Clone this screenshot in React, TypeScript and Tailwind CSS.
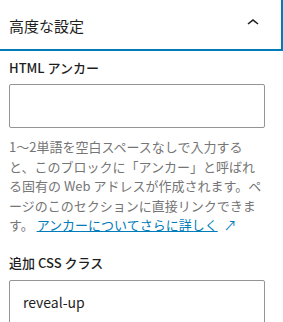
import React from 'react';

const font = "font-['Noto_Sans_CJK_JP','Noto_Sans',sans-serif]";

export default function App() {
    return (
        <div lang="ja" className={`w-[283px] h-[322px] overflow-hidden bg-white text-[#1e1e1e] ${font}`}>
            {/* Panel header (focused) */}
            <div className="h-[51px] flex items-start justify-between pl-[9px] pr-[16px] border-r-2 border-b-2 border-[#007cba]">
                <h2 className="mt-[16px] text-[15px] leading-[20px] font-normal">高度な設定</h2>
                <svg className="mt-[11px]" width="24" height="24" viewBox="0 0 24 24" fill="#1e1e1e">
                    <path d="M6.5 12.4L12 8l5.5 4.4-.9 1.2L12 10l-4.5 3.6-1-1.2z" />
                </svg>
            </div>

            <div className="pl-[9px] pr-[18px]">
                {/* HTML anchor */}
                <label className="block mt-[7px] text-[13px] leading-[20px] font-medium">HTML アンカー</label>
                <input
                    type="text"
                    className="mt-[6px] block w-full h-[44px] border border-[#949494] rounded-[2px] px-[13px] text-[14px] outline-none"
                />
                <p className="mt-[9px] text-[13px] leading-[19.5px] text-[#757575]">
                    1〜2単語を空白スペースなしで入力すると、このブロックに「アンカー」と呼ばれる固有の Web アドレスが作成されます。ページのこのセクションに直接リンクできます。{' '}
                    <a href="#" className="text-[#007cba] underline">アンカーについてさらに詳しく</a>
                    <span className="inline-block text-[#007cba] ml-[6px]">↗</span>
                </p>

                {/* Additional CSS class */}
                <label className="block mt-[18px] text-[13px] leading-[20px] font-medium">追加 CSS クラス</label>
                <input
                    type="text"
                    defaultValue="reveal-up"
                    className="mt-[7px] block w-full h-[44px] border border-[#949494] rounded-[2px] px-[13px] text-[14px] text-[#1e1e1e] outline-none"
                />
            </div>
        </div>
    );
}
